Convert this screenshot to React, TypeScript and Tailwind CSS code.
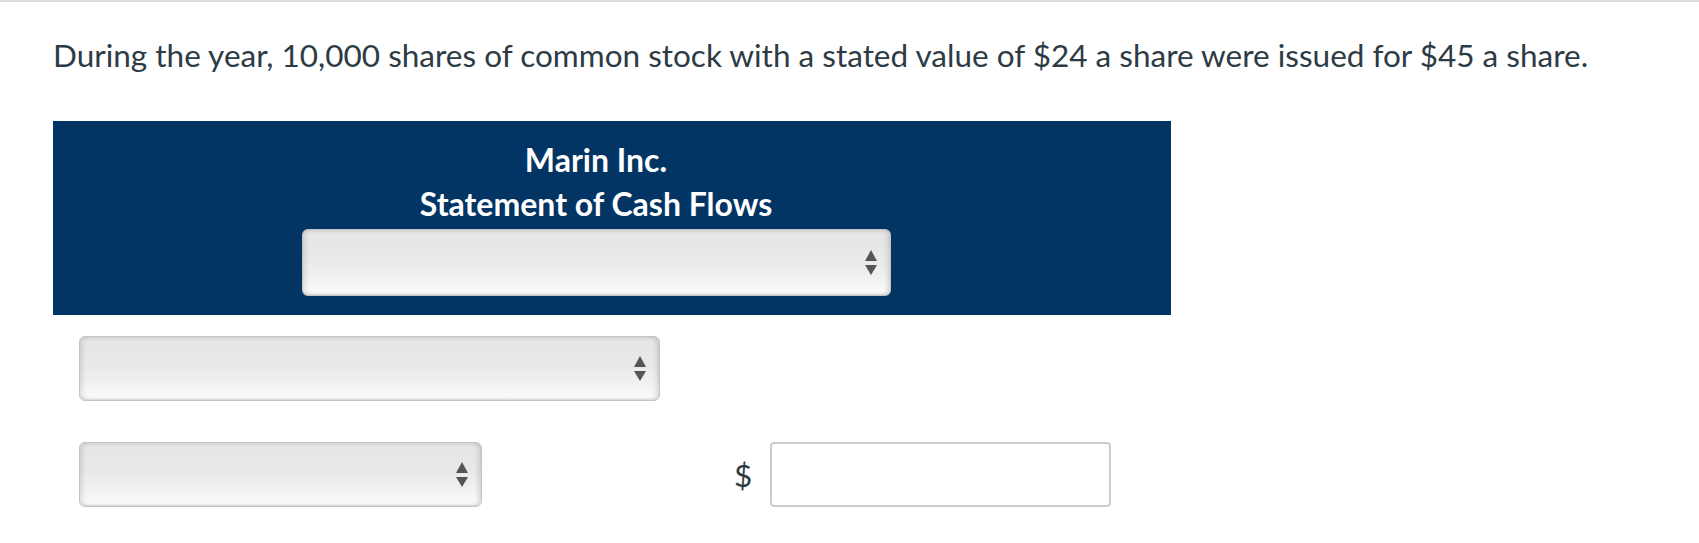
import React from "react";

function Arrows() {
  return (
    <svg width="12" height="26" viewBox="0 0 12 26" className="shrink-0">
      <polygon points="6,0 12,11 0,11" fill="#555555" />
      <polygon points="0,15 12,15 6,25" fill="#555555" />
    </svg>
  );
}

function FakeSelect({ className }: { className: string }) {
  return (
    <div
      className={
        "flex items-center justify-end pr-[13px] rounded-[6px] border border-[#c4c4c4] bg-[linear-gradient(to_bottom,#e5e5e5_0%,#e9e9e9_45%,#f0f0f0_70%,#fbfbfb_100%)] shadow-[inset_3px_0_4px_rgba(0,0,0,0.09),inset_-3px_0_4px_rgba(0,0,0,0.11),inset_0_-1px_2px_rgba(0,0,0,0.06)] " +
        className
      }
    >
      <Arrows />
    </div>
  );
}

export default function App() {
  return (
    <div className="w-[1699px] h-[543px] overflow-hidden bg-white font-['Lato','Liberation_Sans',sans-serif] text-[#2d3b45]">
      <div className="h-[2px] bg-[#dcdcdc]" />
      <div className="pl-[53px] pt-[34px] text-[31.5px] leading-[38px]">
        During the year, 10,000 shares of common stock with a stated value of $24 a share were issued for $45 a share.
      </div>
      <div className="ml-[53px] mt-[47px] w-[1118px] h-[194px] bg-[#023563] flex flex-col items-center pr-[32px] pt-[17px] text-white text-[32px] font-bold leading-[44px]">
        <div>Marin Inc.</div>
        <div>Statement of Cash Flows</div>
        <FakeSelect className="mt-[3px] w-[589px] h-[67px]" />
      </div>
      <FakeSelect className="ml-[79px] mt-[21px] w-[581px] h-[65px]" />
      <div className="flex items-center mt-[41px]">
        <FakeSelect className="ml-[79px] w-[403px] h-[65px]" />
        <span className="ml-[252px] text-[31.5px] leading-[38px]">$</span>
        <div className="ml-[18px] w-[341px] h-[65px] rounded-[4px] border-2 border-[#cccccc] bg-white" />
      </div>
    </div>
  );
}
